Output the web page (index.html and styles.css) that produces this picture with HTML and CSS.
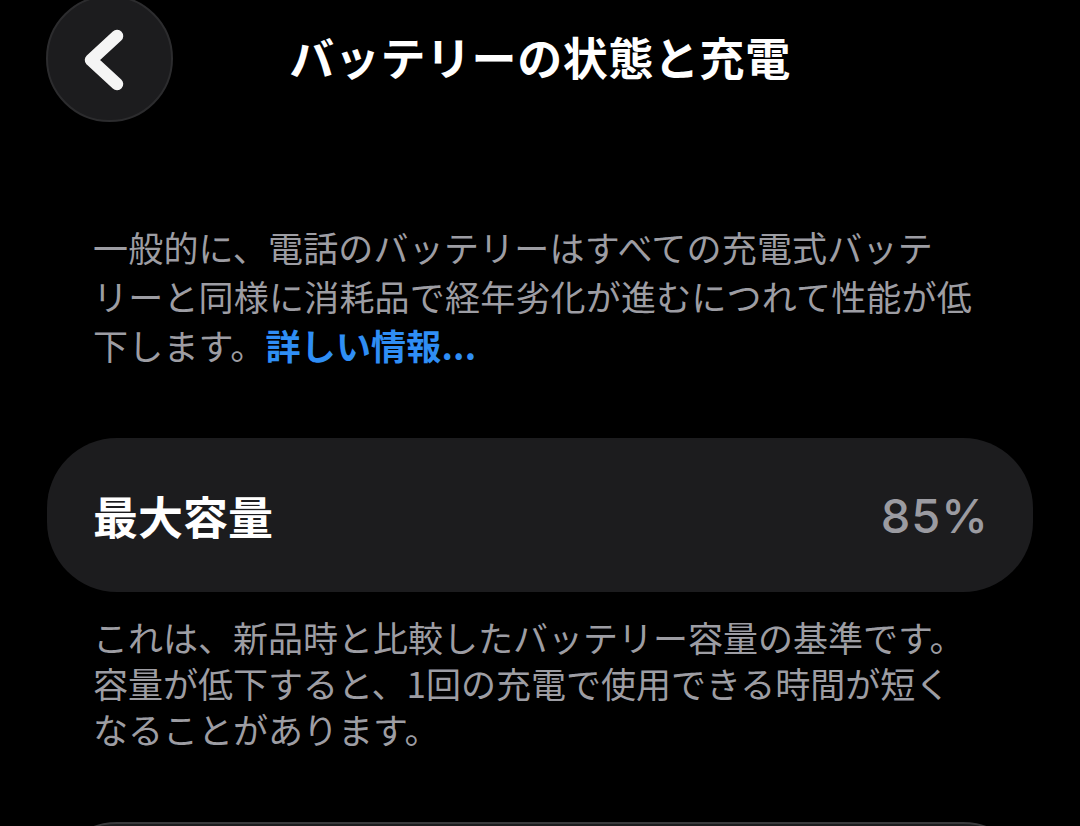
FILE: index.html
```html
<!DOCTYPE html>
<html lang="ja">
<head>
<meta charset="utf-8">
<title>バッテリーの状態と充電</title>
<link rel="stylesheet" href="styles.css">
</head>
<body>
<header class="nav">
  <button class="back" aria-label="戻る">
    <svg viewBox="0 0 127 127" width="127" height="127" aria-hidden="true">
      <polyline points="71,41 45,65 71,89" fill="none" stroke="#f5f5f5" stroke-width="12.5" stroke-linecap="round" stroke-linejoin="round"/>
    </svg>
  </button>
  <h1 class="title">バッテリーの状態と充電</h1>
  <span class="spacer"></span>
</header>

<p class="intro">一般的に、電話のバッテリーはすべての充電式バッテ<br>リーと同様に消耗品で経年劣化が進むにつれて性能が低<br>下します。<a class="link" href="#">詳しい情報...</a></p>

<section class="card">
  <span class="label">最大容量</span>
  <span class="value">85%</span>
</section>

<p class="footnote">これは、新品時と比較したバッテリー容量の基準です。<br>容量が低下すると、1回の充電で使用できる時間が短く<br>なることがあります。</p>

<section class="card next"></section>
</body>
</html>
```

FILE: styles.css
```css
* { box-sizing: border-box; }

html, body {
  margin: 0;
  padding: 0;
  background: #000;
  height: 100%;
  overflow: hidden;
}

body {
  font-family: "Inter", "Noto Sans CJK JP", sans-serif;
  color: #fff;
}

.nav {
  display: grid;
  grid-template-columns: 1fr auto 1fr;
  align-items: center;
  height: 118px;
  padding: 0 46px;
}

.back {
  width: 127px;
  height: 127px;
  margin-top: -5px;
  border-radius: 50%;
  background: #1c1c1e;
  border: 2px solid #2c2c2e;
  padding: 0;
  display: flex;
  align-items: center;
  justify-content: center;
  justify-self: start;
}

.back svg { display: block; margin: -2px; }

.title {
  margin: -9px 0 0;
  font-family: "Noto Sans CJK JP", sans-serif;
  font-size: 45px;
  font-weight: 700;
  line-height: 1;
  letter-spacing: 0.6px;
  color: #fff;
}

.intro {
  margin: 104px 0 0;
  padding-left: 93px;
  font-family: "Noto Sans CJK JP", sans-serif;
  font-size: 35px;
  line-height: 49px;
  letter-spacing: 0.2px;
  color: #9d9da3;
  white-space: nowrap;
}

.link {
  color: #2f8ef5;
  font-weight: 700;
  text-decoration: none;
}

.card {
  margin: 69px 47px 0;
  height: 154px;
  border-radius: 70px;
  background: #1c1c1e;
  display: flex;
  align-items: center;
  justify-content: space-between;
  padding: 0 44px 0 46px;
}

.label {
  font-family: "Noto Sans CJK JP", sans-serif;
  font-size: 45px;
  font-weight: 700;
  color: #fff;
}

.value {
  font-size: 47px;
  font-weight: 500;
  letter-spacing: 1px;
  color: #9b9ba1;
}

.footnote {
  margin: 22px 0 0;
  padding-left: 93px;
  font-family: "Noto Sans CJK JP", sans-serif;
  font-size: 35px;
  line-height: 46px;
  color: #9d9da3;
  white-space: nowrap;
}

.card.next {
  margin-top: 70px;
  background: #1c1c1e;
  border-top: 2px solid #3a3a3c;
}
```
